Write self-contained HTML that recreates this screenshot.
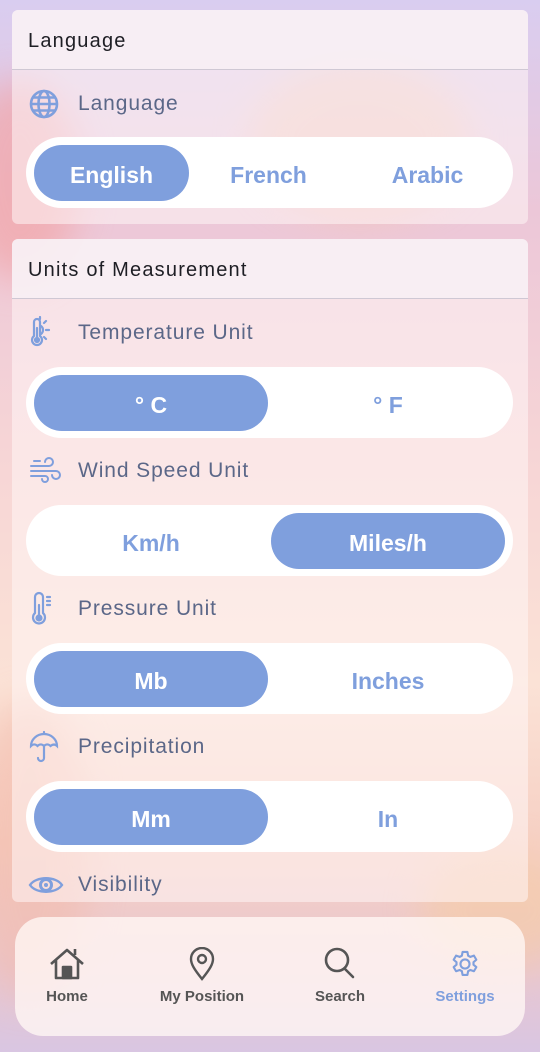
<!DOCTYPE html>
<html><head><meta charset="utf-8"><style>
*{box-sizing:border-box;margin:0;padding:0}
body{width:540px;height:1052px;overflow:hidden;position:relative;font-family:"Liberation Sans",sans-serif;
background:linear-gradient(180deg,#d9cdf0 0%,#ecc7d8 20%,#f7d6d6 45%,#fbe2d6 65%,#f6d0c4 80%,#e9c7d0 92%,#d9c6e2 100%);}
.blob{position:absolute;border-radius:50%;filter:blur(18px)}
.card{position:absolute;left:12px;width:516px;background:rgba(255,246,246,.55);border-radius:6px;overflow:hidden}
.hd{height:60px;background:rgba(248,240,244,.85);border-bottom:1.5px solid #cfc8d4;font-size:20px;letter-spacing:1.2px;color:#1e1e24;padding:20px 0 0 16px}
.row{position:absolute;left:0;height:30px;display:flex;align-items:center;font-size:21px;color:#5b6788}
.row svg{position:absolute;left:16px}
.row span{position:absolute;left:66px;top:3px;white-space:nowrap;letter-spacing:.9px}
.pill{position:absolute;left:14px;width:487px;height:71px;background:#fff;border-radius:36px}
.seg{position:absolute;top:8px;height:56px;padding-top:5px;border-radius:28px;display:flex;align-items:center;justify-content:center;font-size:23px;font-weight:bold;color:#7f9fdd}
.on{background:#7f9fdd;color:#fff}
.nav{position:absolute;left:15px;top:917px;width:510px;height:119px;border-radius:28px;background:rgba(255,246,244,.8)}
.it{position:absolute;top:0;text-align:center;font-size:15px;font-weight:bold;color:#555}
.it svg{display:block;margin:30px auto 0}
.it div{margin-top:7px}
</style></head><body>
<div class="blob" style="left:-40px;top:80px;width:120px;height:200px;background:#f3a0a0;opacity:.6"></div>
<div class="blob" style="left:250px;top:60px;width:220px;height:160px;background:#f6c4a8;opacity:.5"></div>
<div class="blob" style="left:-30px;top:700px;width:120px;height:300px;background:#f2b8a8;opacity:.5"></div>
<div class="blob" style="left:420px;top:850px;width:160px;height:120px;background:#f7cc9e;opacity:.5"></div>

<div class="card" style="top:10px;height:214px">
 <div class="hd">Language</div>
 <div class="row" style="top:79px"><svg width="32" height="32" viewBox="0 0 32 32" fill="none" stroke="#7f9fdd" stroke-width="2.6"><circle cx="16" cy="16" r="13"/><ellipse cx="16" cy="16" rx="5.5" ry="13"/><path d="M3 16h26M5 9.5h22M5 22.5h22"/></svg><span>Language</span></div>
 <div class="pill" style="top:127px"><div class="seg on" style="left:8px;width:155px">English</div><div class="seg" style="left:165px;width:155px">French</div><div class="seg" style="left:324px;width:155px">Arabic</div></div>
</div>

<div class="card" style="top:239px;height:663px">
 <div class="hd">Units of Measurement</div>
 <div class="row" style="top:79px"><svg width="32" height="34" viewBox="0 0 32 34" fill="none" stroke="#7f9fdd" stroke-width="2.2" stroke-linecap="round"><path d="M6 20V6a3 3 0 016 0v14a5 5 0 11-6 0z"/><circle cx="9" cy="24" r="2" fill="#7f9fdd"/><path d="M9 22V12M13 10a5 5 0 010 8M18 14h3M16 7l2-2M16 21l2 2M12 3V1"/></svg><span>Temperature Unit</span></div>
 <div class="pill" style="top:128px"><div class="seg on" style="left:8px;width:234px">° C</div><div class="seg" style="left:245px;width:234px">° F</div></div>
 <div class="row" style="top:217px"><svg width="34" height="28" viewBox="0 0 34 28" fill="none" stroke="#7f9fdd" stroke-width="2" stroke-linecap="round"><path d="M3 9h18a4 4 0 10-4-4M3 14h25a4 4 0 11-4 4M3 19h14a3 3 0 11-3 3M6 4h6"/></svg><span>Wind Speed Unit</span></div>
 <div class="pill" style="top:266px"><div class="seg" style="left:8px;width:234px">Km/h</div><div class="seg on" style="left:245px;width:234px">Miles/h</div></div>
 <div class="row" style="top:355px"><svg width="30" height="36" viewBox="0 0 30 36" fill="none" stroke="#7f9fdd" stroke-width="2.2" stroke-linecap="round"><path d="M7 22V6a4 4 0 018 0v16a6 6 0 11-8 0z"/><circle cx="11" cy="27" r="2.5" fill="#7f9fdd"/><path d="M11 25V14M19 6h3M19 10h3M19 14h3"/></svg><span>Pressure Unit</span></div>
 <div class="pill" style="top:404px"><div class="seg on" style="left:8px;width:234px">Mb</div><div class="seg" style="left:245px;width:234px">Inches</div></div>
 <div class="row" style="top:493px"><svg width="32" height="34" viewBox="0 0 32 34" fill="none" stroke="#7f9fdd" stroke-width="2.2" stroke-linecap="round"><path d="M3 16a13 12 0 0126 0c-2-2-4-2-6.5 0-2-2-4.5-2-6.5 0-2-2-4.5-2-6.5 0C7.5 14 5 14 3 16zM16 3v-1M16 16v12a3 3 0 01-6 0"/></svg><span>Precipitation</span></div>
 <div class="pill" style="top:542px"><div class="seg on" style="left:8px;width:234px">Mm</div><div class="seg" style="left:245px;width:234px">In</div></div>
 <div class="row" style="top:631px"><svg width="36" height="24" viewBox="0 0 36 24" fill="none" stroke="#7f9fdd" stroke-width="2.4"><path d="M2 12C8 3 28 3 34 12 28 21 8 21 2 12z"/><circle cx="18" cy="12" r="5.5" stroke-width="3"/><circle cx="18" cy="12" r="2" fill="#7f9fdd" stroke="none"/></svg><span>Visibility</span></div>
</div>

<div class="nav">
 <div class="it" style="left:15px;width:74px"><svg width="36" height="34" viewBox="0 0 36 34" fill="none" stroke="#555" stroke-width="2.6" stroke-linejoin="round"><path d="M2 17L18 3l16 14M7 13v18h22V13M26 8V2"/><rect x="14" y="20" width="8" height="11" fill="#555"/></svg><div>Home</div></div>
 <div class="it" style="left:137px;width:100px"><svg width="26" height="34" viewBox="0 0 26 34" fill="none" stroke="#555" stroke-width="2.4"><path d="M13 32C5 22 2 17 2 12a11 11 0 0122 0c0 5-3 10-11 20z"/><circle cx="13" cy="12" r="4"/></svg><div>My Position</div></div>
 <div class="it" style="left:290px;width:70px"><svg width="32" height="34" viewBox="0 0 32 34" fill="none" stroke="#555" stroke-width="2.6" stroke-linecap="round"><circle cx="13" cy="13" r="11"/><path d="M21 22l8 8"/></svg><div>Search</div></div>
 <div class="it" style="left:412px;width:76px;color:#7f9fdd"><svg width="34" height="34" viewBox="0 0 24 24" fill="none" stroke="#7f9fdd" stroke-width="1.5" stroke-linejoin="round"><path d="M10.3 1.5h3.4l.5 2.6 1.6.9 2.5-.9 1.7 2.9-2 1.7v1.8l2 1.7-1.7 2.9-2.5-.9-1.6.9-.5 2.6h-3.4l-.5-2.6-1.6-.9-2.5.9-1.7-2.9 2-1.7V8.7l-2-1.7 1.7-2.9 2.5.9 1.6-.9z" transform="translate(0 2)"/><circle cx="12" cy="12" r="3.2"/></svg><div>Settings</div></div>
</div>
</body></html>
